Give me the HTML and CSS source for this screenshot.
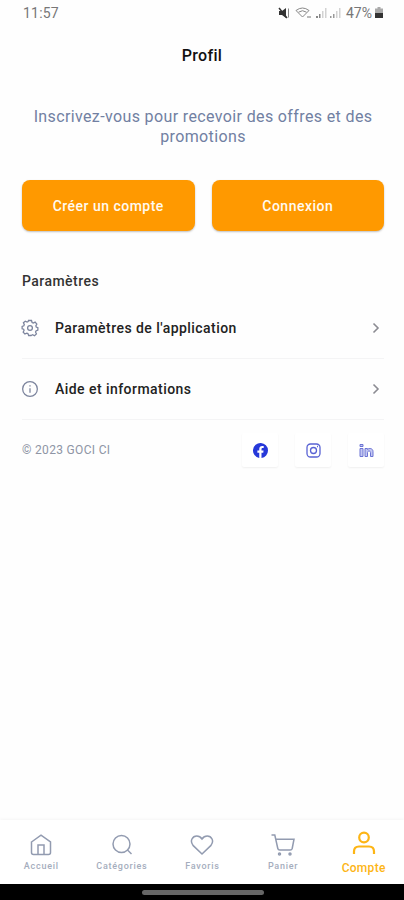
FILE: index.html
```html
<!doctype html>
<html lang="fr">

<head>
  <meta charset="utf-8">
  <meta name="viewport" content="width=device-width, initial-scale=1">
  <title>Profil</title>
  <link rel="stylesheet" href="styles.css">
</head>

<body>
  <div class="screen">
    <div class="status-bar">
      <span class="time">11:57</span>
      <div class="status-icons">
        <svg class="mute" width="12" height="12" viewBox="0 0 12 12">
          <path d="M1 4h3l4-3v10L4 8H1z" fill="#333" />
          <path d="M1 1l8 10" stroke="#333" stroke-width="1.500" fill="none" />
          <path d="M10.500 1.500v9" stroke="#888" fill="none" />
        </svg>
        <svg class="wifi" width="18" height="12" viewBox="0 0 18 12">
          <path d="M1 3.500Q7.500-1.500 14 3.500L7.500 10z M3.500 5.200q4-3 8 0" fill="none" stroke="#888" />
          <path d="M12 10h4" stroke="#bbb" stroke-width="2" />
        </svg>
        <svg class="signal" width="12" height="12" viewBox="0 0 12 12">
          <path d="M1 9h2v2H1zM4 7h1.500v4H4z" fill="#888" />
          <path d="M7 4h1.500v7H7zM10 1h1.500v10H10z" fill="#d2d2d2" />
        </svg>
        <svg class="signal" width="12" height="12" viewBox="0 0 12 12">
          <path d="M1 9h1.500v2H1zM4 7h1.500v4H4z" fill="#999" />
          <path d="M7 4h1.500v7H7zM10 1h1.500v10H10z" fill="#d2d2d2" />
        </svg>
        <span class="percent">47%</span>
        <svg class="battery" width="8" height="12" viewBox="0 0 8 12">
          <path d="M2.500 0h3v1.500H8V6H0V1.500h2.500z" fill="#aaa" />
          <path d="M0 6h8v5H0z" fill="#333" />
        </svg>
      </div>
    </div>

    <h1 class="title">Profil</h1>

    <main class="content">
      <p class="intro">Inscrivez-vous pour recevoir des offres et des promotions</p>

      <div class="button-group">
        <button type="button">Créer un compte</button>
        <button type="button">Connexion</button>
      </div>

      <h2 class="section-title">Paramètres</h2>
      <div class="settings">
        <a class="row">
          <svg class="row-icon" width="18" height="18" viewBox="0 0 24 24">
            <path d="M10 2h4l.8 2.700 1.500.7 2.500-1.300 2.300 2.700-1.300 2.400.5 1.500 2.200 1v3.200l-2.500 1-.6 1.500 1.200 2.500-2.600 2.400-2.400-1.300-1.500.6L13.500 22h-3.300l-1-2.600-1.500-.6-2.500 1.200-2.300-2.500 1.200-2.400-.6-1.500L1.500 13v-3l2.300-1 .6-1.500L3.200 5l2.500-2.100 2.400 1.200 1.400-.6z" />
            <circle cx="12" cy="12" r="3.200" />
          </svg>
          <span class="row-label">Paramètres de l'application</span>
          <svg class="chevron" width="8" height="12" viewBox="0 0 8 12"><path d="M1.500 1.500L6 6l-4.500 4.500" /></svg>
        </a>
        <a class="row">
          <svg class="row-icon" width="18" height="18" viewBox="0 0 24 24">
            <circle cx="12" cy="12" r="9.800" />
            <path d="M12 11v6M12 7v1.500" />
          </svg>
          <span class="row-label">Aide et informations</span>
          <svg class="chevron" width="8" height="12" viewBox="0 0 8 12"><path d="M1.500 1.500L6 6l-4.500 4.500" /></svg>
        </a>
      </div>

      <div class="footer">
        <span class="copyright">© 2023 GOCI CI</span>
        <div class="socials">
          <a class="social">
            <svg width="15" height="15" viewBox="0 0 24 24">
              <path fill="#2638d9" d="M24 12A12 12 0 1 0 10 23.900V15.500H7V12h3V9.400C10 6.400 11.800 4.700 14.600 4.700c1.300 0 2.500.2 2.500.2v3h-1.500c-1.500 0-2 .9-2 1.900V12h3.300l-.5 3.500h-2.800v8.400A12 12 0 0 0 24 12z" />
            </svg>
          </a>
          <a class="social">
            <svg width="15" height="15" viewBox="0 0 15 15" fill="none" stroke="#5963d4" stroke-width="1.300">
              <rect x="1" y="1" width="13" height="13" rx="3.500" />
              <circle cx="7.500" cy="7.500" r="3" />
              <path d="M11 3.500h1" />
            </svg>
          </a>
          <a class="social">
            <svg width="15" height="15" viewBox="0 0 15 15" fill="#c3c7f2" stroke="#6c74d4" stroke-width="1">
              <path d="M1 5.500h3v8H1zM1 1.500h3v2H1zM6 13.500v-8h2.500v1c1.500-1.800 5.500-1.300 5.500 2v5h-2.500v-4c0-2-3-2-3 0v4z" />
            </svg>
          </a>
        </div>
      </div>
    </main>

    <nav class="tab-bar">
      <a class="tab">
        <svg width="22" height="22" viewBox="0 0 22 22">
          <path d="M1.500 8L11 1.200 20.500 8v10.500a2 2 0 0 1-2 2h-15a2 2 0 0 1-2-2zM8 20.500V11h6v9.500" />
        </svg>
        <span>Accueil</span>
      </a>
      <a class="tab">
        <svg width="22" height="22" viewBox="0 0 22 22">
          <circle cx="10.500" cy="10" r="8.500" />
          <path d="M16.500 16l4 4" />
        </svg>
        <span>Catégories</span>
      </a>
      <a class="tab">
        <svg width="24" height="22" viewBox="0 0 24 22">
          <path d="M12 20L3 11.400C-.5 6.800 2.500 2 6.800 2c2.300 0 4 1.200 5.200 3 1.200-1.800 2.900-3 5.200-3 4.300 0 7.300 4.800 3.800 9.400z" />
        </svg>
        <span>Favoris</span>
      </a>
      <a class="tab">
        <svg width="24" height="22" viewBox="0 0 24 22">
          <path d="M.500 1h3.300l3 13.500q.3 1.500 2 1.500h10.400q1.600 0 2-1.500L23 5.200H4.800" />
          <circle cx="8.500" cy="20" r="1" />
          <circle cx="19" cy="20" r="1" />
        </svg>
        <span>Panier</span>
      </a>
      <a class="tab active">
        <svg width="24" height="24" viewBox="0 0 24 24">
          <circle cx="12" cy="6.500" r="4.800" />
          <path d="M2 23v-2.500q0-5 5-5h10q5 0 5 5V23" />
        </svg>
        <span>Compte</span>
      </a>
    </nav>
    <div class="system-bar"><span class="handle"></span></div>
  </div>
</body>

</html>
```
FILE: styles.css
```css
* {
  box-sizing: border-box;
}

body {
  margin: 0;
  font-family: Roboto, sans-serif;
  background-color: #fefefe;
}

.screen {
  display: flex;
  flex-direction: column;
  height: 900px;
  overflow: hidden;
}

/* Status bar */
.status-bar {
  display: flex;
  align-items: center;
  justify-content: space-between;
  height: 26px;
  padding: 0 21px 0 23px;
  color: #777;
  font-size: 14px;
}

.time {
  letter-spacing: 0.2px;
}

.status-icons {
  display: flex;
  align-items: center;
}

.wifi {
  margin-left: 5px;
}

.signal {
  margin-left: 2px;
}

.percent {
  margin: 0 3px 0 5px;
}

.title {
  margin: 0;
  height: 60px;
  line-height: 60px;
  font-size: 16px;
  font-weight: 500;
  letter-spacing: 0.3px;
  text-align: center;
  color: #111;
}

.content {
  flex: 1;
  padding: 21px 20px 0 22px;
}

.intro {
  margin: 0;
  font-size: 16px;
  line-height: 20px;
  letter-spacing: 0.37px;
  text-align: center;
  color: #7180a2;
}

/* Buttons */
.button-group {
  display: flex;
  gap: 17px;
  margin-top: 33px;
}

button {
  flex: 1;
  height: 51px;
  padding: 0;
  border: none;
  border-radius: 8px;
  background-color: #ff9900;
  color: #fffaf0;
  font-family: inherit;
  font-size: 14px;
  font-weight: 500;
  letter-spacing: 0.48px;
  box-shadow: 0 1px 2px rgba(0, 0, 0, 0.25);
}

.section-title {
  margin: 39px 0 0;
  line-height: 22px;
  font-size: 14px;
  font-weight: 500;
  letter-spacing: 0.45px;
  color: #333;
}

/* Settings list */
.row {
  display: flex;
  align-items: center;
  height: 61px;
  padding-right: 4px;
  border-bottom: 1px solid #f4f4f5;
}

.settings {
  margin-top: 6px;
}

.row-icon {
  margin-left: -1px;
  fill: none;
  stroke: #7c849d;
  stroke-width: 1.700;
}

.row-label {
  flex: 1;
  margin-left: 16px;
  font-size: 14px;
  font-weight: 500;
  letter-spacing: 0.45px;
  color: #222;
}

.chevron {
  fill: none;
  stroke: #8b8b92;
  stroke-width: 1.600;
}

.footer {
  display: flex;
  align-items: center;
  justify-content: space-between;
  margin-top: 13px;
}

.copyright {
  font-size: 12px;
  letter-spacing: 0.32px;
  color: #8e95a5;
}

.socials {
  display: flex;
  gap: 17px;
}

.social {
  display: flex;
  align-items: center;
  justify-content: center;
  width: 36px;
  height: 34px;
  background-color: #fff;
  border-radius: 2px;
  box-shadow: 0 1px 2px rgba(0, 0, 0, 0.06);
}

/* Bottom navigation */
.tab-bar {
  display: flex;
  height: 64px;
  padding-left: 1px;
  background-color: #fff;
  box-shadow: 0 -1px 3px rgba(0, 0, 0, 0.04);
}

.tab {
  flex: 1;
  display: flex;
  flex-direction: column;
  align-items: center;
  padding-top: 14px;
  font-size: 9px;
  font-weight: 500;
  line-height: 12px;
  letter-spacing: 0.75px;
  color: #a5adbd;
}

.tab svg {
  fill: none;
  stroke: #929bb0;
  stroke-width: 1.500;
}

.tab span {
  margin-top: 4px;
}

.tab.active {
  padding-top: 11px;
  font-size: 12px;
  letter-spacing: 0.3px;
  color: #fdb515;
}

.tab.active svg {
  stroke: #fdb515;
  stroke-width: 2.200;
}

.tab.active span {
  margin-top: 7px;
}

.system-bar {
  display: flex;
  justify-content: center;
  height: 16px;
  padding-top: 6px;
  background-color: #000;
}

.handle {
  width: 122px;
  height: 5px;
  margin-left: 1px;
  border-radius: 3px;
  background-color: #666;
}
```
